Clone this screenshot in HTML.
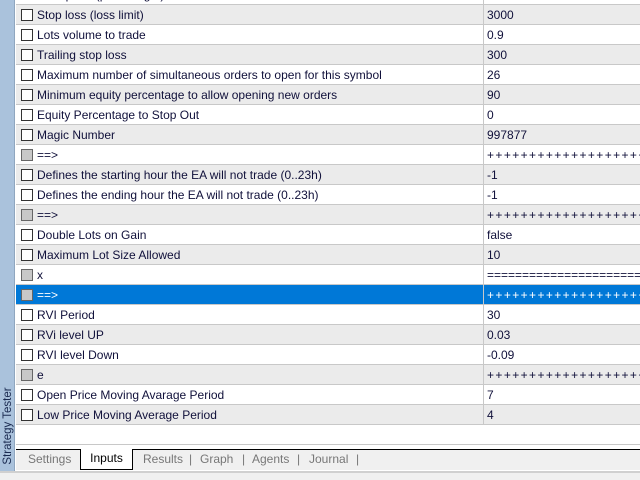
<!DOCTYPE html>
<html><head><style>
*{margin:0;padding:0;box-sizing:border-box}
body{width:640px;height:480px;overflow:hidden;background:#fff;position:relative;font-family:"Liberation Sans",sans-serif;font-size:12px;color:#10103a}
.side{position:absolute;left:0;top:0;width:15px;height:471px;background:#aac2dc;border-right:1px solid #8fa6bf}
.side span{position:absolute;left:-46px;top:420px;width:108px;transform:rotate(-90deg);font-size:11.5px;color:#1a2a50;white-space:nowrap;text-align:center}
.row{position:absolute;left:16px;width:624px;height:20px;border-bottom:1px solid #c8c8c8}
.row.g{background:#ebebeb}
.row.sel{background:#0078d7;color:#fff}
.cb{position:absolute;left:5px;top:4px;width:12px;height:12px;border:1px solid #333;background:#fff}
.cb.d{background:#c8c8c8;border-color:#666}
.n{position:absolute;left:21px;top:3px;white-space:nowrap;line-height:14px}
.v{position:absolute;left:467px;top:0;height:20px;line-height:20px;width:160px;overflow:hidden;white-space:nowrap;border-left:1px solid #c8c8c8;padding-left:3px}
.p{letter-spacing:1.4px}
.tabs{position:absolute;left:16px;top:449px;width:624px;height:21px;background:#f0f0f0;border-top:1px solid #000}
.t{position:absolute;top:2px;color:#777;font-size:12px}
.tab{position:absolute;left:64px;top:-1px;width:53px;height:21px;background:#fff;border:1px solid #000;border-top:none;color:#000;text-align:center;line-height:19px}
.bot{position:absolute;left:0;top:471px;width:640px;height:9px;background:#f0f0f0;border-top:2px solid #d0d0d0}
</style></head><body>
<div class="row" style="top:-15px"><div class="n">Take profit (profit target)</div><div class="v"></div></div>
<div class="row g" style="top:5px"><div class="cb"></div><div class="n">Stop loss (loss limit)</div><div class="v">3000</div></div>
<div class="row" style="top:25px"><div class="cb"></div><div class="n">Lots volume to trade</div><div class="v">0.9</div></div>
<div class="row g" style="top:45px"><div class="cb"></div><div class="n">Trailing stop loss</div><div class="v">300</div></div>
<div class="row" style="top:65px"><div class="cb"></div><div class="n">Maximum number of simultaneous orders to open for this symbol</div><div class="v">26</div></div>
<div class="row g" style="top:85px"><div class="cb"></div><div class="n">Minimum equity percentage to allow opening new orders</div><div class="v">90</div></div>
<div class="row" style="top:105px"><div class="cb"></div><div class="n">Equity Percentage to Stop Out</div><div class="v">0</div></div>
<div class="row g" style="top:125px"><div class="cb"></div><div class="n">Magic Number</div><div class="v">997877</div></div>
<div class="row" style="top:145px"><div class="cb d"></div><div class="n">==&gt;</div><div class="v p">++++++++++++++++++++++</div></div>
<div class="row g" style="top:165px"><div class="cb"></div><div class="n">Defines the starting hour the EA will not trade (0..23h)</div><div class="v">-1</div></div>
<div class="row" style="top:185px"><div class="cb"></div><div class="n">Defines the ending hour the EA will not trade (0..23h)</div><div class="v">-1</div></div>
<div class="row g" style="top:205px"><div class="cb d"></div><div class="n">==&gt;</div><div class="v p">++++++++++++++++++++++</div></div>
<div class="row" style="top:225px"><div class="cb"></div><div class="n">Double Lots on Gain</div><div class="v">false</div></div>
<div class="row g" style="top:245px"><div class="cb"></div><div class="n">Maximum Lot Size Allowed</div><div class="v">10</div></div>
<div class="row" style="top:265px"><div class="cb d"></div><div class="n">x</div><div class="v">========================</div></div>
<div class="row sel" style="top:285px"><div class="cb d"></div><div class="n">==&gt;</div><div class="v p">++++++++++++++++++++++</div></div>
<div class="row" style="top:305px"><div class="cb"></div><div class="n">RVI Period</div><div class="v">30</div></div>
<div class="row g" style="top:325px"><div class="cb"></div><div class="n">RVi level UP</div><div class="v">0.03</div></div>
<div class="row" style="top:345px"><div class="cb"></div><div class="n">RVI level Down</div><div class="v">-0.09</div></div>
<div class="row g" style="top:365px"><div class="cb d"></div><div class="n">e</div><div class="v p">++++++++++++++++++++++</div></div>
<div class="row" style="top:385px"><div class="cb"></div><div class="n">Open Price Moving Avarage Period</div><div class="v">7</div></div>
<div class="row g" style="top:405px"><div class="cb"></div><div class="n">Low Price Moving Average Period</div><div class="v">4</div></div>
<div style="position:absolute;left:16px;top:444px;width:624px;height:1px;background:#c8c8c8"></div>
<div class="tabs">
<div class="t" style="left:12px">Settings</div>
<div class="tab">Inputs</div>
<div class="t" style="left:127px">Results</div>
<div class="t" style="left:173px">|</div>
<div class="t" style="left:184px">Graph</div>
<div class="t" style="left:226px">|</div>
<div class="t" style="left:236px">Agents</div>
<div class="t" style="left:281px">|</div>
<div class="t" style="left:293px">Journal</div>
<div class="t" style="left:340px">|</div>
</div>
<div class="bot"></div>
<div class="side"><span>Strategy Tester</span></div>
</body></html>
